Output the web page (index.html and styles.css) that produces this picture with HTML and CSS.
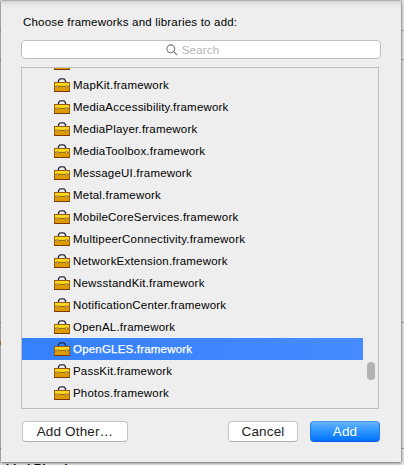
FILE: index.html
```html
<!DOCTYPE html>
<html lang="en">
<head>
<meta charset="utf-8">
<title>Choose frameworks and libraries</title>
<link rel="stylesheet" href="styles.css">
</head>
<body>
<svg class="defs" width="0" height="0" aria-hidden="true">
  <defs>
    <linearGradient id="gold" x1="0" y1="0" x2="0" y2="1">
      <stop offset="0" stop-color="#f2c60c"/><stop offset=".3" stop-color="#f7d413"/><stop offset=".55" stop-color="#dda006"/><stop offset="1" stop-color="#d99a05"/>
    </linearGradient>
    <symbol id="box" viewBox="0 0 16 14">
      <path d="M4.500 4V2.500L6 .8h4l1.500 1.700V4" fill="none" stroke="#2b2a3c" stroke-width="1.300"/>
      <rect x=".5" y="4.500" width="15" height="9" fill="url(#gold)" stroke="#9a5c10"/>
      <path d="M1 6h14" stroke="#ffe53a"/>
      <path d="M1 8.500h14" stroke="#9a650c" stroke-width=".9"/>
      <rect x="2.500" y="7.500" width="2" height="2.200" rx=".8" fill="#f0cc70" stroke="#8a5c20" stroke-width=".6"/>
      <rect x="11.500" y="7.500" width="2" height="2.200" rx=".8" fill="#f0cc70" stroke="#8a5c20" stroke-width=".6"/>
      <path d="M0 13.500h16" stroke="#7d3606"/>
    </symbol>
  </defs>
</svg>
<div class="backdrop"><i class="line l1"></i><i class="line l2"></i><i class="line l3"></i><i class="line l4"></i><i class="dot"></i><b class="under">Embedded Binaries</b></div>
<main class="sheet">
  <h1 class="title">Choose frameworks and libraries to add:</h1>
  <div class="search">
    <svg width="12" height="12" viewBox="0 0 12 12"><circle cx="4.800" cy="4.800" r="3.900"/><path d="M7.600 7.600l3.400 3.400"/></svg>
    <span>Search</span>
  </div>
  <div class="list">
    <div class="row"><svg class="icon"><use href="#box"/></svg></div>
    <div class="row"><svg class="icon"><use href="#box"/></svg><span>MapKit.framework</span></div>
    <div class="row"><svg class="icon"><use href="#box"/></svg><span>MediaAccessibility.framework</span></div>
    <div class="row"><svg class="icon"><use href="#box"/></svg><span>MediaPlayer.framework</span></div>
    <div class="row"><svg class="icon"><use href="#box"/></svg><span>MediaToolbox.framework</span></div>
    <div class="row"><svg class="icon"><use href="#box"/></svg><span>MessageUI.framework</span></div>
    <div class="row"><svg class="icon"><use href="#box"/></svg><span>Metal.framework</span></div>
    <div class="row"><svg class="icon"><use href="#box"/></svg><span>MobileCoreServices.framework</span></div>
    <div class="row"><svg class="icon"><use href="#box"/></svg><span>MultipeerConnectivity.framework</span></div>
    <div class="row"><svg class="icon"><use href="#box"/></svg><span>NetworkExtension.framework</span></div>
    <div class="row"><svg class="icon"><use href="#box"/></svg><span>NewsstandKit.framework</span></div>
    <div class="row"><svg class="icon"><use href="#box"/></svg><span>NotificationCenter.framework</span></div>
    <div class="row"><svg class="icon"><use href="#box"/></svg><span>OpenAL.framework</span></div>
    <div class="row selected"><svg class="icon"><use href="#box"/></svg><span>OpenGLES.framework</span></div>
    <div class="row"><svg class="icon"><use href="#box"/></svg><span>PassKit.framework</span></div>
    <div class="row"><svg class="icon"><use href="#box"/></svg><span>Photos.framework</span></div>
    <div class="thumb"></div>
  </div>
  <div class="actions">
    <button class="other">Add Other…</button>
    <button class="cancel">Cancel</button>
    <button class="add">Add</button>
  </div>
</main>
</body>
</html>
```
FILE: styles.css
```css
* { box-sizing: border-box; }
body {
  margin: 0;
  width: 404px;
  height: 465px;
  overflow: hidden;
  background: #e2e2e2;
  font-family: "Liberation Sans", Arial, sans-serif;
  color: #000;
}
.defs { position: absolute; }
.backdrop { position: absolute; inset: 0; }
.line { position: absolute; left: 0; width: 404px; height: 1px; background: #a9a9a9; }
.l1 { top: 30px; }
.l2 { top: 59px; }
.l3 { top: 322px; }
.l4 { top: 448px; }
.dot { position: absolute; left: 0; top: 341px; width: 2px; height: 4px; background: #d88a3c; }
.under { position: absolute; left: -31px; top: 462px; font-size: 12px; line-height: 14px; white-space: nowrap; }
.sheet {
  position: relative;
  width: 400px;
  height: 461px;
  margin: 1px 0 0 1px;
  padding: 14px 20px 0;
  background: linear-gradient(#d4d4d4, #e6e6e6 3px, #eee 7px);
  box-shadow: 0 0 2px rgba(0, 0, 0, .55), 0 1px 3px rgba(0, 0, 0, .35);
}
.title {
  margin: 0 0 11px 2px;
  font-size: 11.5px;
  font-weight: 400;
  line-height: 14px;
  letter-spacing: .2px;
  white-space: nowrap;
}
.search {
  display: flex;
  align-items: center;
  justify-content: center;
  gap: 4px;
  height: 19px;
  padding-right: 17px;
  border: 1px solid #bfbfbf;
  border-radius: 4px;
  background: #fff;
  color: #b4b4b4;
  font-size: 11.5px;
  letter-spacing: .2px;
}
.search svg { fill: none; stroke: #777; stroke-width: 1.1; }
.list {
  position: relative;
  width: 358px;
  height: 342px;
  margin-top: 8px;
  border: 1px solid #bfbfbf;
  overflow: hidden;
}
.row {
  display: flex;
  align-items: center;
  gap: 3px;
  width: 341px;
  height: 22px;
  padding-left: 32px;
  font-size: 11.5px;
  line-height: 22px;
  letter-spacing: .2px;
  white-space: nowrap;
}
.row:first-child { margin-top: -16px; }
.icon { width: 16px; height: 14px; }
.selected { background: linear-gradient(90deg, #3580fc, #468bff); color: #fff; -webkit-text-stroke: .25px #fff; }
.thumb { position: absolute; right: 3px; top: 294px; width: 8px; height: 18px; border-radius: 4px; background: #b3b3b3; }
.actions { display: flex; margin: 12px 0 0 1px; }
button {
  height: 21px;
  padding: 0;
  border: 1px solid #c4c4c4;
  border-bottom-color: #b0b0b0;
  border-radius: 4px;
  background: #fff;
  font: 13.5px/18px "Liberation Sans", Arial, sans-serif;
  letter-spacing: .15px;
  color: #222;
}
.other { width: 106px; margin-right: auto; }
.cancel { width: 70px; margin-right: 12px; }
.add {
  width: 70px;
  margin-right: 1px;
  border-color: #4796f0 #1f7cf5 #1a58e8;
  background: linear-gradient(#66b3fb, #2b93fc 50%, #0071ff);
  color: #fff;
}
```
